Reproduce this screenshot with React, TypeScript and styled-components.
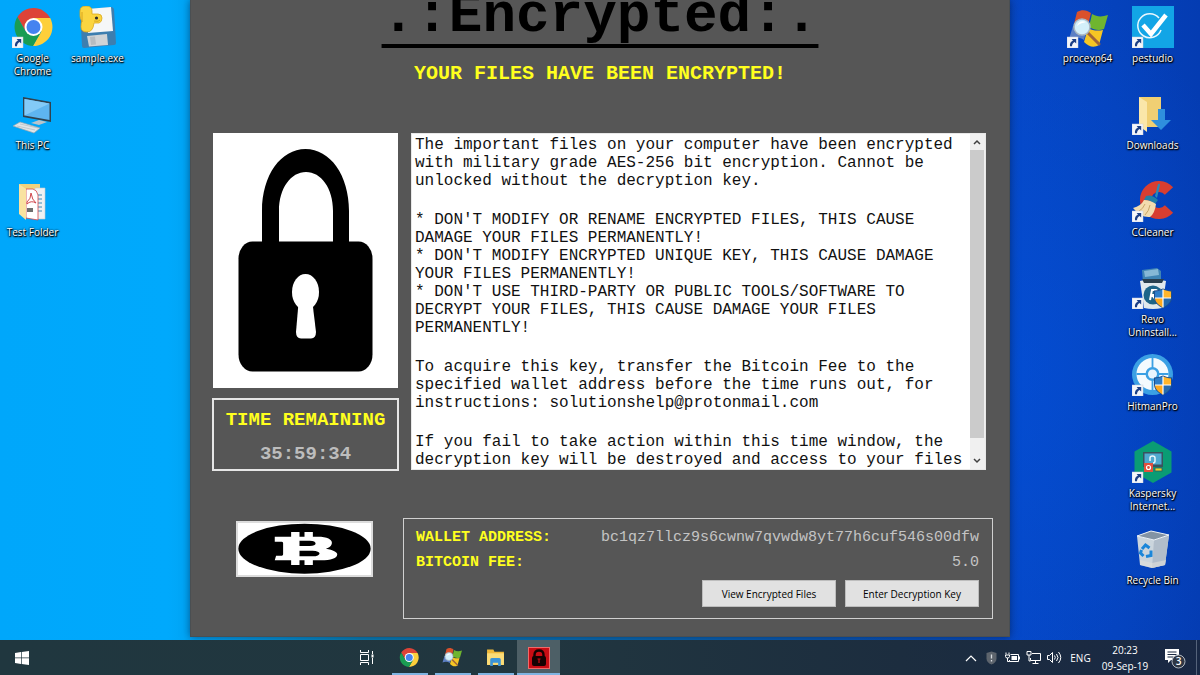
import React from "react";
import styled, { createGlobalStyle } from "styled-components";

const GlobalStyle = createGlobalStyle`
  *, *::before, *::after { box-sizing: border-box; }
  html, body { margin: 0; padding: 0; }
  body { font-family: "Open Sans", "Noto Sans", sans-serif; overflow: hidden; }
  button { font-family: inherit; border: 0; padding: 0; background: none; cursor: default; }
  svg { display: block; }
`;

const mono = `"Liberation Mono", "Courier New", monospace`;

const Screen = styled.div`
  min-height: 100vh;
  display: flex;
  flex-direction: column;
  background:
    radial-gradient(ellipse 22% 60% at 84% 55%, rgba(0, 90, 235, 0.35), rgba(0, 90, 235, 0)),
    linear-gradient(90deg, #00a7fb 0%, #00a9fc 14%, #0a80b4 30%, #0a66ae 55%, #0a4bb0 80%, #0646c4 85%, #0542bc 93%, #043cb2 100%);
`;

const Desktop = styled.main`
  flex: 1;
  display: grid;
  grid-template-columns: 19fr 82fr 19fr;
  align-items: start;
`;

const IconArea = styled.div<{ $end?: boolean }>`
  display: flex;
  justify-content: ${(p) => (p.$end ? "flex-end" : "flex-start")};
  padding-right: ${(p) => (p.$end ? "15px" : "0")};
`;

const IconColumn = styled.div`
  width: 65px;
  display: flex;
  flex-direction: column;
`;

const IconTile = styled.button`
  height: 87px;
  padding-top: 6px;
  display: flex;
  flex-direction: column;
  align-items: center;
  gap: 4px;
  color: #fff;
  font-size: 10px;
  font-weight: 500;
  line-height: 13px;
  text-shadow: 0 1px 2px #000, 1px 1px 1px #000, 0 0 2px #000;
`;

const TileLabel = styled.span`
  text-align: center;
  white-space: pre-line;
`;

const Window = styled.section`
  background: #565656;
  border: 1px solid #4a4f52;
  border-top: 0;
  box-shadow: 0 0 8px rgba(0, 20, 60, 0.55);
  padding-bottom: 17px;
  margin-bottom: 3px;
`;

const Title = styled.h1`
  margin: 0;
  text-align: center;
  font: bold 56px/32px ${mono};
  color: #000;
  text-decoration: underline;
  text-decoration-thickness: 4px;
  text-underline-offset: 13px;
  text-decoration-skip-ink: none;
`;

const Subtitle = styled.h2`
  margin: 30px 0 47px;
  text-align: center;
  font: bold 20px/24px ${mono};
  color: #ffff1e;
`;

const Upper = styled.div`
  display: flex;
  gap: 12px;
  padding: 0 23px 0 21px;
`;

const LeftColumn = styled.div`
  flex: 0 0 187px;
  display: flex;
  flex-direction: column;
  align-items: center;
  gap: 10px;
`;

const LockFrame = styled.div`
  background: #fff;
`;

const TimerBox = styled.div`
  align-self: stretch;
  height: 73px;
  border: 2px solid #e6e6e6;
  text-align: center;
  padding-top: 8px;
  display: flex;
  flex-direction: column;
  gap: 10px;
  font: bold 19px/24px ${mono};
`;

const TimerTitle = styled.div`
  color: #ffff1e;
`;

const TimerValue = styled.time`
  color: #bdbdbd;
`;

const MessageBox = styled.div`
  flex: 1;
  min-width: 0;
  height: 337px;
  display: flex;
  background: #fff;
  border: 1px solid #e8e8e8;
`;

const Message = styled.div`
  flex: 1;
  min-width: 0;
  overflow: hidden;
  padding: 2px 0 0 3px;
  font: 16px/18px ${mono};
  color: #111;
`;

const Paragraph = styled.p`
  margin: 0 0 21px;
  white-space: pre;
`;

const Scrollbar = styled.div`
  width: 15px;
  display: flex;
  flex-direction: column;
  background: #f0f0f0;
  padding-right: 1px;
`;

const ScrollButton = styled.button`
  height: 16px;
  display: flex;
  align-items: center;
  justify-content: center;
`;

const ScrollTrack = styled.div`
  flex: 1;
`;

const ScrollThumb = styled.div`
  height: 95%;
  background: #cbcbcb;
`;

const Lower = styled.div`
  display: flex;
  align-items: flex-start;
  gap: 30px;
  padding: 0 16px 0 45px;
  margin-top: 47px;
`;

const BitcoinFrame = styled.div`
  margin-top: 3px;
  border: 2px solid #dcdcdc;
  background: #fff;
`;

const Payment = styled.div`
  flex: 1;
  border: 1px solid #d0d0d0;
  padding: 6px 13px 11px 12px;
`;

const PaymentList = styled.dl`
  margin: 0;
  font: bold 15px/25px ${mono};
`;

const PaymentRow = styled.div`
  display: flex;
  justify-content: space-between;
`;

const PaymentLabel = styled.dt`
  color: #ffff1e;
`;

const PaymentValue = styled.dd`
  margin: 0;
  font-weight: normal;
  color: #c4c4c4;
`;

const Actions = styled.div`
  display: flex;
  justify-content: flex-end;
  gap: 9px;
  margin-top: 5px;
`;

const ActionButton = styled.button`
  width: 134px;
  height: 27px;
  background: #e1e1e1;
  border: 1px solid #bdbdbd;
  color: #000;
  font-size: 10px;
  line-height: 14px;
`;

const Taskbar = styled.footer`
  height: 35px;
  display: flex;
  color: #fff;
  background: linear-gradient(90deg, #20373f 0%, #21363f 45%, #1c2d3f 75%, #192844 100%);
`;

const TaskButton = styled.button<{ $active?: boolean; $open?: boolean }>`
  width: 43px;
  padding-bottom: 6px;
  padding-top: 6px;
  display: flex;
  align-items: center;
  justify-content: center;
  background-color: ${(p) => (p.$active ? "#4d5f66" : "transparent")};
  background-image: ${(p) => (p.$active || p.$open ? "linear-gradient(#7fb4e2, #7fb4e2)" : "none")};
  background-repeat: no-repeat;
  background-position: bottom center;
  background-size: ${(p) => (p.$active ? "100% 2px" : "36px 2px")};
`;

const Pinned = styled.nav`
  display: flex;
  margin-left: 302px;
`;

const Tray = styled.div`
  margin-left: auto;
  display: flex;
  align-items: center;
`;

const TrayButton = styled.button`
  width: 21px;
  height: 100%;
  display: flex;
  align-items: center;
  justify-content: center;
`;

const Language = styled.button`
  width: 31px;
  color: #fff;
  font-size: 10px;
  line-height: 16px;
`;

const Clock = styled.time`
  width: 58px;
  text-align: center;
  font-size: 10px;
  line-height: 16px;
  white-space: pre-line;
`;

const Notices = styled.button`
  width: 42px;
  height: 100%;
  display: flex;
  align-items: center;
  justify-content: center;
`;

const ShowDesktop = styled.button`
  width: 4px;
  height: 100%;
  border-left: 1px solid #55637a;
`;

/* ---------- drawings ---------- */

const Shortcut = () => (
  <g>
    <rect x="0" y="31" width="11" height="11" fill="#f4f6fa" stroke="#c9cfda" strokeWidth=".5" />
    <path d="M4.6 33h4.6v4.6L7.6 36C5.9 37 5 38.3 5 40.3H3c-.5-2.7.7-4.9 3-5.9z" fill="#1c3f86" />
  </g>
);

const Shield = () => (
  <g>
    <path d="M22 23.500c4 0 6-1 9-2 3 1 5 2 9 2v7c0 5-4 8-9 11-5-3-9-6-9-11z" fill="#1d4f8e" />
    <path d="M31 22.500c-3 1-5 1.800-8 2v6.500h8z" fill="#2d7dc8" />
    <path d="M31 22.500c3 1 5 1.800 8 2v6.500h-8z" fill="#ffb52b" />
    <path d="M23 31c0 4 4 7.500 8 9.500V31z" fill="#ffa91e" />
    <path d="M39 31c0 4-4 7.500-8 9.500V31z" fill="#2369b0" />
    <path d="M31 22.500v18M23 31h16" stroke="#fff" strokeWidth="1.200" />
  </g>
);

const ChromeMark = () => (
  <g transform="translate(21.500 21)">
    <path d="M-16.140-9.960A19 19 0 0 1 16.700-9L0-9-7.800 4.500Z" fill="#dd4337" />
    <path d="M16.700-9A19 19 0 0 1-.560 18.960L7.800 4.500 0-9Z" fill="#fdcf3b" />
    <path d="M-.560 18.960A19 19 0 0 1-16.140-9.960L-7.800 4.500 7.800 4.500Z" fill="#1a9c53" />
    <circle r="9" fill="#fff" />
    <circle r="7" fill="#4583f0" />
  </g>
);

const FlagMark = () => (
  <g>
    <path d="M9 4c5-3 10-2 14 1l-3 12c-5-3-9-3-14-1z" fill="#d9512c" />
    <path d="M24 6c5 3 10 3 16 1l-4 14c-5 2-10 1-15-2z" fill="#6fb52f" />
    <path d="M5 18c5-3 10-2 14 1l-3 13c-5-3-10-3-15-1z" fill="#5c7fc4" />
    <path d="M20 20c5 3 10 3 15 2l-4 15c-5 3-10 2-15-3z" fill="#f6c624" />
    <path d="M20 25l11 11" stroke="#a0653a" strokeWidth="3" strokeLinecap="round" />
    <circle cx="14" cy="19" r="8" fill="#d3effa" stroke="#aab8c2" strokeWidth="1.500" />
    <path d="M9 18c1-4 5-6 9-4-3 1-6 1-9 4z" fill="#fff" />
  </g>
);

const svgProps = { width: 42, height: 42, viewBox: "0 0 42 42", "aria-hidden": true } as const;

const ChromeIcon = () => (
  <svg {...svgProps}><ChromeMark /><Shortcut /></svg>
);

const SampleIcon = () => (
  <svg {...svgProps}>
    <path d="M3 4l31-3q2 0 3 2l2 34q0 2-2 2L7 42q-2 0-2-2z" fill="#3d7eaf" />
    <path d="M10 3l24-2 2 24-25 2z" fill="#f5f7f8" />
    <path d="M10 30l20-2 1 11-19 1.500z" fill="#cfd3d6" />
    <path d="M13 31l5-.500 1 8-5 .500z" fill="#b6bcc1" />
    <path d="M3 5q0-5 6-5 6 0 6 5v3h6q4 0 4 4 0 4-3 5h-5q-1 9-7 9-6 0-6-5 0-4 1-6-2-2-2-5z" fill="#fbd540" stroke="#dba920" strokeWidth=".800" />
    <path d="M17 15q5 1 6-1M5 6v10" stroke="#d9a51d" strokeWidth="1" fill="none" />
    <circle cx="19.500" cy="12" r="1.600" fill="#2b2b2b" />
  </svg>
);

const PcIcon = () => (
  <svg {...svgProps}>
    <path d="M11 4l28 5v20l-28-5z" fill="#30424f" />
    <path d="M12.500 6l25 4.500V27l-25-4.500z" fill="#5eb5f0" />
    <path d="M12.500 6l25 4.500-25 12z" fill="#83caf7" />
    <path d="M19 30l8-3 8 2-8 3z" fill="#b9c4cb" />
    <path d="M1 33l7-4 20 6-6 5z" fill="#dfe5e8" stroke="#98a5ad" strokeWidth=".700" />
    <path d="M5 33l18 4M8 31l18 4" stroke="#aab5bc" strokeWidth=".600" />
  </svg>
);

const TestFolderIcon = () => (
  <svg {...svgProps}>
    <path d="M7 4h21v33H12z" fill="#f2d27c" />
    <path d="M23 8h10v31H22z" fill="#eef1f3" stroke="#c3c9cc" strokeWidth=".600" />
    <path d="M27 14v18M29 14v18" stroke="#3d8bb8" strokeWidth="1" strokeDasharray="2 2" />
    <path d="M14 9h7q4 1 5 6v25l-12-2z" fill="#fff" stroke="#d0464c" strokeWidth=".800" />
    <path d="M15 22q4-3 4-9 1 7 5 10-5-3-9 1z" fill="none" stroke="#d0464c" strokeWidth="1" />
    <path d="M15 28h6v4h-6z" fill="#6e6e6e" />
    <path d="M7 4l7 5v31l-7-6z" fill="#f9e3a1" />
  </svg>
);

const ProcexpIcon = () => (
  <svg {...svgProps}><g transform="translate(1 2)"><FlagMark /></g><Shortcut /></svg>
);

const PestudioIcon = () => (
  <svg {...svgProps}>
    <rect width="42" height="42" fill="#12a5e6" />
    <path d="M27 12A12 12 0 1 0 29 24" fill="none" stroke="#e9f7fe" strokeWidth="1.500" />
    <path d="M11 19l8 9L34 9" fill="none" stroke="#fff" strokeWidth="4.500" />
    <Shortcut />
  </svg>
);

const DownloadsIcon = () => (
  <svg {...svgProps}>
    <path d="M7 4h22v30H13z" fill="#f0cf73" />
    <path d="M7 4l8 5v30l-8-6z" fill="#fae6a9" />
    <path d="M26 16h7v11h6L29 37 19 27h7z" fill="#2f8fdd" />
    <Shortcut />
  </svg>
);

const CCleanerIcon = () => (
  <svg {...svgProps}>
    <path d="M37 11A13.500 13.500 0 1 0 37 29" fill="none" stroke="#d83e30" strokeWidth="11" />
    <path d="M23 16l3-12q2-1 2 1l-3 13z" fill="#2a8bb5" />
    <path d="M14 16q6-2 12 4l-3 4q-5-4-11-4z" fill="#237fa5" />
    <path d="M12 20q6 0 12 4-1 9-6 13-9 1-17-9 8-2 11-8z" fill="#f3dcae" />
    <path d="M13 24q-2 5-6 7M18 25q-1 6-5 10" stroke="#c9a76a" strokeWidth="1" fill="none" />
    <Shortcut />
  </svg>
);

const RevoIcon = () => (
  <svg {...svgProps}>
    <path d="M10 3l15-2 4 3v9l-18 3z" fill="#3f84b4" />
    <path d="M12 4l14-2 1 6-14 2z" fill="#86b8d6" />
    <path d="M8 14q13-4 26 0l-4 27q-9 2-18 0z" fill="#e1e8ec" />
    <path d="M10 12h22l-2 4H12z" fill="#2a3f4e" />
    <circle cx="21" cy="28" r="9.500" fill="#1d6488" />
    <path d="M18 33l2-10h4q3 1 0 5h-4l4 5" stroke="#fff" strokeWidth="2" fill="none" />
    <Shield />
    <Shortcut />
  </svg>
);

const HitmanIcon = () => (
  <svg {...svgProps}>
    <circle cx="20.500" cy="20.500" r="20.500" fill="#3ba0e4" />
    <circle cx="20.500" cy="20" r="11.500" fill="none" stroke="#f4fafe" strokeWidth="9" />
    <circle cx="20.500" cy="20" r="4.500" fill="#e9f5fd" />
    <path d="M20.500 4v11M20.500 25v11M4.500 20h11M25.500 20h11" stroke="#3ba0e4" strokeWidth="1.800" />
    <Shield />
    <Shortcut />
  </svg>
);

const KasperskyIcon = () => (
  <svg {...svgProps}>
    <path d="M21 0l18.500 10.500v21L21 42 2.500 31.500v-21z" fill="#0a9c74" />
    <rect x="11" y="11" width="20" height="15" fill="#39535d" />
    <rect x="12.500" y="12.500" width="17" height="11" fill="#4fa9cf" />
    <path d="M18 20v-3q0-2 2.500-2t2.500 2v3q0 2-2 2" fill="none" stroke="#e9f5fa" strokeWidth="1.500" />
    <rect x="12" y="22" width="9" height="9" fill="#e1503c" />
    <circle cx="16.500" cy="26.500" r="2" fill="none" stroke="#fff" strokeWidth="1.200" />
    <rect x="23" y="27" width="7" height="3" fill="#e8d52f" stroke="#39535d" strokeWidth=".800" />
    <Shortcut />
  </svg>
);

const RecycleIcon = () => (
  <svg {...svgProps}>
    <path d="M5 8l17 4 15-5-4 30-13 3-12-3z" fill="#cbd5dd" />
    <path d="M22 12l15-5-4 30-13 3z" fill="#b1bdca" />
    <path d="M8 32l12 3 14-3-1 5-13 3-12-3z" fill="#dfe0dc" opacity=".6" />
    <path d="M5 8l14-5 18 4-15 5z" fill="#8393a4" stroke="#eef2f5" strokeWidth="1" />
    <path d="M10 21l3.500-4 4 3M19 22.500l0 5-5 1M11.500 28l-3-3 1-3" fill="none" stroke="#1a86d9" strokeWidth="3" />
  </svg>
);

const LockPicture = () => (
  <svg width="185" height="255" viewBox="0 0 185 255" role="img" aria-label="Padlock">
    <path d="M49 110V78C49 42 68 16 92.500 16S136 42 136 78v32h-16V78c0-23-12-39-27-39S66 55 66 78v32z" />
    <rect x="25.500" y="108.500" width="134" height="130" rx="14" ry="17" />
    <ellipse cx="92.500" cy="159" rx="13.500" ry="18" fill="#fff" />
    <path d="M85.500 170h14l3.500 29q0 6-5 6.500h-10q-5-.500-5-6.500z" fill="#fff" />
  </svg>
);

const BitcoinPicture = () => (
  <svg width="133" height="52" viewBox="7 5 398 156" preserveAspectRatio="none" role="img" aria-label="Bitcoin">
    <ellipse cx="206" cy="82" rx="198" ry="75" />
    <path fill="#fff" d="M166 32h25v16h-25zM206 32h25v16h-25zM166 115h25v16h-25zM206 115h25v16h-25z" />
    <path
      fill="#fff"
      fillRule="evenodd"
      d="M117 46H245C275 46 288 54 288 64 288 73 280 79 270 82 292 86 304 92 304 99 304 112 285 117 255 117H117L121 103H135C141 103 142 101 142 97V66C142 62 140 61 134 61H117ZM191 58V74H222C245 74 245 58 222 58ZM191 88V105H230C258 105 258 88 230 88Z"
    />
  </svg>
);

const Arrow = ({ down }: { down?: boolean }) => (
  <svg width="8" height="6" viewBox="0 0 8 6" aria-hidden>
    <path d={down ? "M1 1l3 3 3-3" : "M1 5l3-3 3 3"} fill="none" stroke="#404040" strokeWidth="1.500" />
  </svg>
);

const StartIcon = () => (
  <svg width="14" height="14" viewBox="0 0 14 14" aria-hidden>
    <path d="M0 2l6-.900v5.500H0zM6.700 1L14 0v6.600H6.700zM0 7.300h6v5.600L0 12zM6.700 7.300H14V14l-7.300-1z" fill="#fff" />
  </svg>
);

const TaskViewIcon = () => (
  <svg width="15" height="15" viewBox="0 0 15 15" fill="none" stroke="#fff" strokeWidth="1" aria-hidden>
    <path d="M1.500 0v2.500h8V0M1.500 15v-2.500h8V15M1.500 4.500h8v6h-8zM13.500 1v3M13.500 8v6" />
    <rect x="12.500" y="4.500" width="2" height="3" fill="#fff" stroke="none" />
  </svg>
);

const ExplorerIcon = () => (
  <svg width="19" height="19" viewBox="0 0 18 18" aria-hidden>
    <path d="M1 1.500h6l1 2h9V16H1z" fill="#f0b93a" />
    <path d="M1 5h16v11H1z" fill="#fbdc78" />
    <path d="M4 11q0-1.500 1.500-1.500h7Q14 9.500 14 11v6h-2.500v-3h-5v3H4z" fill="#3a93d8" />
  </svg>
);

const RedLockIcon = () => (
  <svg width="22" height="22" viewBox="0 0 22 22" aria-hidden>
    <rect x=".500" y=".500" width="21" height="21" fill="#c90d14" stroke="#ef6a6a" />
    <path d="M6.500 10V8q0-4.500 4.500-4.500T15.500 8v2" fill="none" stroke="#160202" strokeWidth="2.400" />
    <rect x="4" y="9" width="14" height="10" rx="2" fill="#160202" />
    <path d="M9.500 12h3M11 12v4" stroke="#c90d14" strokeWidth="1.200" />
  </svg>
);

const ChevronIcon = () => (
  <svg width="12" height="8" viewBox="0 0 12 8" aria-hidden>
    <path d="M1 7l5-5 5 5" fill="none" stroke="#fff" strokeWidth="1.200" />
  </svg>
);

const AlertIcon = () => (
  <svg width="11" height="14" viewBox="0 0 11 14" aria-hidden>
    <path d="M5.500.500L10.500 2v5.500q0 4-5 6-5-2-5-6V2z" fill="#5d646d" />
    <path d="M5.500 3.500v4M5.500 9v1.500" stroke="#d8dbe0" strokeWidth="1.300" />
  </svg>
);

const BatteryIcon = () => (
  <svg width="15" height="12" viewBox="0 0 15 12" fill="none" stroke="#fff" aria-hidden>
    <path d="M5.500 2.500h8v7h-9V8M14.500 4.500v3" />
    <rect x="6.500" y="4" width="5.500" height="4" fill="#fff" stroke="none" />
    <path d="M1 .500v2M4 .500v2M.500 3h4v1.500q0 1.500-2 1.500t-2-1.500zM2.500 6v3.500h2" />
  </svg>
);

const NetworkIcon = () => (
  <svg width="15" height="13" viewBox="0 0 15 13" fill="none" stroke="#fff" aria-hidden>
    <path d="M6 2.500h8.500v7H4.500V7M9.500 9.500V12M6.500 12.500h6" />
    <path d="M1 .500h4v3.500H1zM3 4v6h1.500" />
  </svg>
);

const VolumeIcon = () => (
  <svg width="15" height="13" viewBox="0 0 15 13" fill="none" stroke="#fff" aria-hidden>
    <path d="M.500 4.500h2l3-3v10l-3-3h-2zM7.500 4.500q1.500 2 0 4M9.500 3q3 3.500 0 7M11.500 1q4.500 5.500 0 11" />
  </svg>
);

const NoticesIcon = () => (
  <svg width="22" height="22" viewBox="0 0 22 22" aria-hidden>
    <path d="M1 2h14v11H7l-3 3v-3H1z" fill="#fff" />
    <path d="M3.500 5h9M3.500 7.500h9M3.500 10h6" stroke="#1b2a42" />
    <circle cx="14.500" cy="14.500" r="6.500" fill="#2e3745" stroke="#b0b6bf" />
    <text x="14.500" y="18" textAnchor="middle" fontSize="10" fontWeight="600" fill="#fff">3</text>
  </svg>
);

/* ---------- content ---------- */

type Item = { label: string; Icon: React.FC };

const leftColumns: Item[][] = [
  [
    { label: "Google\nChrome", Icon: ChromeIcon },
    { label: "This PC", Icon: PcIcon },
    { label: "Test Folder", Icon: TestFolderIcon },
  ],
  [{ label: "sample.exe", Icon: SampleIcon }],
];

const rightColumns: Item[][] = [
  [{ label: "procexp64", Icon: ProcexpIcon }],
  [
    { label: "pestudio", Icon: PestudioIcon },
    { label: "Downloads", Icon: DownloadsIcon },
    { label: "CCleaner", Icon: CCleanerIcon },
    { label: "Revo\nUninstall...", Icon: RevoIcon },
    { label: "HitmanPro", Icon: HitmanIcon },
    { label: "Kaspersky\nInternet...", Icon: KasperskyIcon },
    { label: "Recycle Bin", Icon: RecycleIcon },
  ],
];

const paragraphs = [
  "The important files on your computer have been encrypted\nwith military grade AES-256 bit encryption. Cannot be\nunlocked without the decryption key.",
  "* DON'T MODIFY OR RENAME ENCRYPTED FILES, THIS CAUSE\nDAMAGE YOUR FILES PERMANENTLY!\n* DON'T MODIFY ENCRYPTED UNIQUE KEY, THIS CAUSE DAMAGE\nYOUR FILES PERMANENTLY!\n* DON'T USE THIRD-PARTY OR PUBLIC TOOLS/SOFTWARE TO\nDECRYPT YOUR FILES, THIS CAUSE DAMAGE YOUR FILES\nPERMANENTLY!",
  "To acquire this key, transfer the Bitcoin Fee to the\nspecified wallet address before the time runs out, for\ninstructions: solutionshelp@protonmail.com",
  "If you fail to take action within this time window, the\ndecryption key will be destroyed and access to your files",
];

const Icons = ({ columns, end }: { columns: Item[][]; end?: boolean }) => (
  <IconArea $end={end}>
    {columns.map((column, i) => (
      <IconColumn key={i}>
        {column.map(({ label, Icon }) => (
          <IconTile key={label} type="button">
            <Icon />
            <TileLabel>{label}</TileLabel>
          </IconTile>
        ))}
      </IconColumn>
    ))}
  </IconArea>
);

export default function App() {
  return (
    <Screen>
      <GlobalStyle />
      <Desktop>
        <Icons columns={leftColumns} />
        <Window>
          <Title>.:Encrypted:.</Title>
          <Subtitle>YOUR FILES HAVE BEEN ENCRYPTED!</Subtitle>
          <Upper>
            <LeftColumn>
              <LockFrame><LockPicture /></LockFrame>
              <TimerBox>
                <TimerTitle>TIME REMAINING</TimerTitle>
                <TimerValue>35:59:34</TimerValue>
              </TimerBox>
            </LeftColumn>
            <MessageBox>
              <Message>
                {paragraphs.map((text) => (
                  <Paragraph key={text}>{text}</Paragraph>
                ))}
              </Message>
              <Scrollbar>
                <ScrollButton type="button" aria-label="Scroll up"><Arrow /></ScrollButton>
                <ScrollTrack><ScrollThumb /></ScrollTrack>
                <ScrollButton type="button" aria-label="Scroll down"><Arrow down /></ScrollButton>
              </Scrollbar>
            </MessageBox>
          </Upper>
          <Lower>
            <BitcoinFrame><BitcoinPicture /></BitcoinFrame>
            <Payment>
              <PaymentList>
                <PaymentRow>
                  <PaymentLabel>WALLET ADDRESS:</PaymentLabel>
                  <PaymentValue>bc1qz7llcz9s6cwnw7qvwdw8yt77h6cuf546s00dfw</PaymentValue>
                </PaymentRow>
                <PaymentRow>
                  <PaymentLabel>BITCOIN FEE:</PaymentLabel>
                  <PaymentValue>5.0</PaymentValue>
                </PaymentRow>
              </PaymentList>
              <Actions>
                <ActionButton type="button">View Encrypted Files</ActionButton>
                <ActionButton type="button">Enter Decryption Key</ActionButton>
              </Actions>
            </Payment>
          </Lower>
        </Window>
        <Icons columns={rightColumns} end />
      </Desktop>
      <Taskbar>
        <TaskButton type="button" aria-label="Start"><StartIcon /></TaskButton>
        <Pinned>
          <TaskButton type="button" aria-label="Task view"><TaskViewIcon /></TaskButton>
          <TaskButton type="button" aria-label="Google Chrome" $open>
            <svg width="21" height="21" viewBox="1 0 42 42" aria-hidden><ChromeMark /></svg>
          </TaskButton>
          <TaskButton type="button" aria-label="Process Explorer" $open>
            <svg width="21" height="21" viewBox="0 0 42 42" aria-hidden><FlagMark /></svg>
          </TaskButton>
          <TaskButton type="button" aria-label="File Explorer" $open><ExplorerIcon /></TaskButton>
          <TaskButton type="button" aria-label="Encrypted" $active><RedLockIcon /></TaskButton>
        </Pinned>
        <Tray>
          <TrayButton type="button" aria-label="Show hidden icons"><ChevronIcon /></TrayButton>
          <TrayButton type="button" aria-label="Security"><AlertIcon /></TrayButton>
          <TrayButton type="button" aria-label="Battery"><BatteryIcon /></TrayButton>
          <TrayButton type="button" aria-label="Network"><NetworkIcon /></TrayButton>
          <TrayButton type="button" aria-label="Volume"><VolumeIcon /></TrayButton>
          <Language type="button">ENG</Language>
          <Clock>{"20:23\n09-Sep-19"}</Clock>
          <Notices type="button" aria-label="Notifications"><NoticesIcon /></Notices>
          <ShowDesktop type="button" aria-label="Show desktop" />
        </Tray>
      </Taskbar>
    </Screen>
  );
}
